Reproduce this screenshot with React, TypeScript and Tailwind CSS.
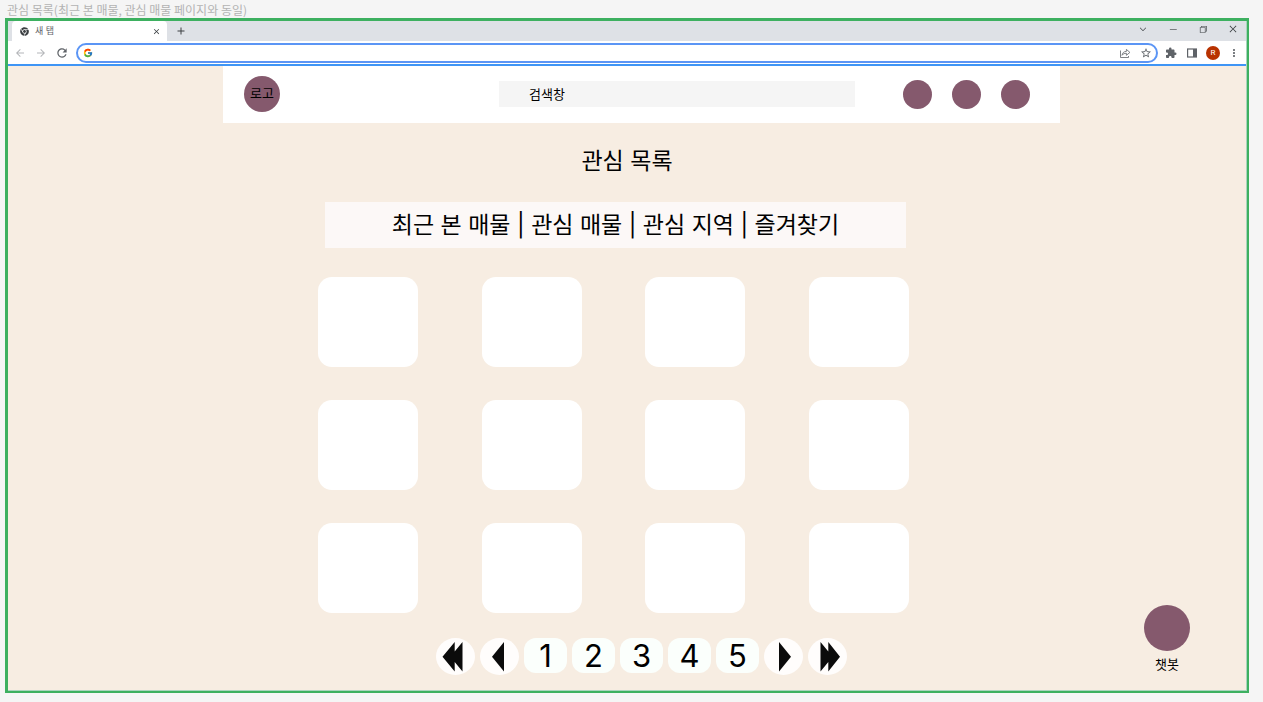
import type { ReactNode } from 'react';
import { FaChrome } from 'react-icons/fa';
import { FcGoogle } from 'react-icons/fc';
import {
  MdAdd,
  MdArrowBack,
  MdArrowForward,
  MdClose,
  MdExtension,
  MdMoreVert,
  MdRefresh,
  MdStarBorder,
} from 'react-icons/md';
import { VscChevronDown, VscChromeClose, VscChromeMinimize, VscChromeRestore } from 'react-icons/vsc';

const SECTIONS = ['최근 본 매물', '관심 매물', '관심 지역', '즐겨찾기'];
const SHORTCUTS = ['알림', '관심', '내 정보'];
const LISTINGS = Array.from({ length: 12 }, (_, i) => i + 1);
const PAGES = [1, 2, 3, 4, 5];

function ShareIcon() {
  return (
    <svg viewBox="0 0 12 12" className="h-3 w-3" fill="none" stroke="currentColor" strokeWidth="0.8">
      <path d="M1.5 3.5V10.5H9.5V9" />
      <path d="M3 8.3C3.4 5.8 4.9 4.5 7.4 4.4V2.4L10.9 5.4L7.4 8.3V6.3C5.3 6.3 4 6.9 3 8.3Z" />
    </svg>
  );
}

function SidePanelIcon() {
  return (
    <svg viewBox="0 0 12 12" className="h-3 w-3">
      <rect x="1.6" y="2" width="8.8" height="8" fill="none" stroke="currentColor" strokeWidth="1.2" />
      <rect x="7" y="2" width="3.4" height="8" fill="currentColor" />
    </svg>
  );
}

function TabStrip() {
  return (
    <div className="flex h-5 bg-[#dee1e6] pl-1">
      <div className="flex h-full w-[155px] items-center rounded-t-sm bg-white pl-2 pr-1.5 text-[#3c4043]">
        <FaChrome className="h-[9px] w-[9px]" />
        <span className="ml-1.5 font-['Inter','Noto_Sans_CJK_KR',sans-serif] text-[9px] leading-3 text-[#5f6368]">
          새 탭
        </span>
        <button type="button" aria-label="탭 닫기" className="ml-auto">
          <MdClose className="h-[9px] w-[9px]" />
        </button>
      </div>
      <button type="button" aria-label="새 탭 열기" className="ml-2 text-[#3c4043]">
        <MdAdd className="h-3 w-3" />
      </button>
      <div className="ml-auto flex items-center gap-5 pb-1 pr-2 text-[#3c4043]">
        <button type="button" aria-label="탭 검색">
          <VscChevronDown className="h-2.5 w-2.5" />
        </button>
        <button type="button" aria-label="최소화">
          <VscChromeMinimize className="h-2.5 w-2.5" />
        </button>
        <button type="button" aria-label="이전 크기로 복원">
          <VscChromeRestore className="h-2.5 w-2.5" />
        </button>
        <button type="button" aria-label="닫기">
          <VscChromeClose className="h-2.5 w-2.5" />
        </button>
      </div>
    </div>
  );
}

function ToolbarButton({ label, children }: { label: string; children: ReactNode }) {
  return (
    <button type="button" aria-label={label} className="flex h-3.5 w-3.5 items-center justify-center">
      {children}
    </button>
  );
}

function Toolbar() {
  return (
    <div className="flex h-[25px] items-center border-b-2 border-[#3f95f5] bg-white px-[5px] text-[#5f6368]">
      <div className="flex w-[63px] gap-[7px]">
        <span className="flex gap-[7px] text-[#b4b6b9]">
          <ToolbarButton label="뒤로">
            <MdArrowBack className="h-3 w-3" />
          </ToolbarButton>
          <ToolbarButton label="앞으로">
            <MdArrowForward className="h-3 w-3" />
          </ToolbarButton>
        </span>
        <ToolbarButton label="새로고침">
          <MdRefresh className="h-3.5 w-3.5" />
        </ToolbarButton>
      </div>
      <div className="flex h-5 min-w-0 flex-1 items-center rounded-full border-2 border-[#5b95f5] bg-white pl-[5px] pr-[3px]">
        <FcGoogle className="h-2.5 w-2.5" />
        <input aria-label="주소창" className="ml-2 min-w-0 flex-1 text-[9px] leading-3 outline-none" />
        <div className="flex gap-[7px]">
          <ToolbarButton label="공유">
            <ShareIcon />
          </ToolbarButton>
          <ToolbarButton label="북마크">
            <MdStarBorder className="h-3 w-3" />
          </ToolbarButton>
        </div>
      </div>
      <div className="ml-1.5 flex items-center gap-[7px]">
        <ToolbarButton label="확장 프로그램">
          <MdExtension className="h-3 w-3" />
        </ToolbarButton>
        <ToolbarButton label="측면 패널">
          <SidePanelIcon />
        </ToolbarButton>
        <button
          type="button"
          className="flex h-3.5 w-3.5 items-center justify-center rounded-full bg-[#b83200] font-['Roboto',sans-serif] text-[8px] leading-none text-white"
        >
          R
        </button>
        <ToolbarButton label="메뉴">
          <MdMoreVert className="h-3 w-3" />
        </ToolbarButton>
      </div>
    </div>
  );
}

function SiteHeader() {
  return (
    <div className="pl-[29px]">
      <header className="mx-auto flex h-[57px] max-w-[837px] items-center bg-white pb-px pl-[21px] pr-[30px]">
        <a
          href="#"
          className="flex h-9 w-9 shrink-0 items-center justify-center rounded-full bg-[#85596d] pb-0.5 text-[13px] leading-5"
        >
          로고
        </a>
        <input
          type="search"
          aria-label="검색창"
          placeholder="검색창"
          className="ml-[219px] mr-12 h-[26px] min-w-0 flex-1 bg-[#f5f5f5] pb-0.5 pl-[30px] text-[13px] leading-5 outline-none placeholder:text-black placeholder:opacity-100"
        />
        <div className="flex gap-5">
          {SHORTCUTS.map((name) => (
            <button key={name} type="button" aria-label={name} className="h-[29px] w-[29px] rounded-full bg-[#85596d]" />
          ))}
        </div>
      </header>
    </div>
  );
}

function SectionTabs() {
  return (
    <div className="mt-[23px] pr-[23px]">
      <nav className="mx-auto max-w-[581px] bg-[#fcf8f7] py-[5px] text-center font-['Inter','Noto_Sans_CJK_KR',sans-serif] text-[23px] leading-9">
        {SECTIONS.map((section, i) => (
          <span key={section}>
            {i > 0 && ' | '}
            <a href="#">{section}</a>
          </span>
        ))}
      </nav>
    </div>
  );
}

function Listings() {
  return (
    <div className="mt-[29px] pr-[27px]">
      <ul className="mx-auto grid max-w-[591px] grid-cols-[repeat(4,100px)] justify-between gap-y-[33px]">
        {LISTINGS.map((id) => (
          <li key={id} className="h-[90px] rounded-[14px] bg-white" />
        ))}
      </ul>
    </div>
  );
}

function ArrowButton({ label, children }: { label: string; children: ReactNode }) {
  return (
    <button
      type="button"
      aria-label={label}
      className="flex h-[37px] w-[39px] items-center justify-center rounded-[50%] bg-[#fffdfc]"
    >
      <svg viewBox="0 0 39 37" className="h-[37px] w-[39px]" fill="#0b0b0b">
        {children}
      </svg>
    </button>
  );
}

function Pagination() {
  return (
    <div className="mt-[25px] pl-[29px]">
      <nav aria-label="페이지" className="flex items-start justify-center gap-[5px]">
        <ArrowButton label="처음">
          <path d="M6.5 18.7L18.7 4V13.6L26.5 4V33.5L18.7 24V33.5Z" />
        </ArrowButton>
        <ArrowButton label="이전">
          <path d="M12 18.7L24 4V33.5Z" />
        </ArrowButton>
        {PAGES.map((page) => (
          <button
            key={page}
            type="button"
            className="h-[35px] w-[43px] rounded-xl bg-[#fbfffc] font-['Inter',sans-serif] text-[31px] leading-[35px]"
          >
            {page}
          </button>
        ))}
        <ArrowButton label="다음">
          <path d="M27 18.7L15 4V33.5Z" />
        </ArrowButton>
        <ArrowButton label="마지막">
          <path d="M32 18.7L20.3 4V13.6L12.5 4V33.5L20.3 24V33.5Z" />
        </ArrowButton>
      </nav>
    </div>
  );
}

export default function App() {
  return (
    <div className="min-h-screen bg-[#f5f5f5] pb-[9px] pl-[5px] pr-[14px] font-['Noto_Sans_CJK_KR',sans-serif] text-black">
      <p className="h-[18px] pl-0.5 pt-0.5 text-xs leading-4 text-[#b3b3b3]">
        관심 목록(최근 본 매물, 관심 매물 페이지와 동일)
      </p>
      <div className="border-b-2 border-l-[3px] border-r-2 border-t-[3px] border-[#3db060]">
        <div className="relative border-b border-r border-[#a9d4bd] bg-[#f7ede2] pb-[15px]">
          <TabStrip />
          <Toolbar />
          <main>
            <SiteHeader />
            <h1 className="mt-5 text-center font-['Inter','Noto_Sans_CJK_KR',sans-serif] text-[23px] leading-9">
              관심 목록
            </h1>
            <SectionTabs />
            <Listings />
            <Pagination />
          </main>
          <button type="button" className="absolute bottom-4 right-14 flex flex-col items-center gap-[3px]">
            <span className="h-[46px] w-[46px] rounded-full bg-[#85596d]" />
            <span className="text-[13px] leading-5">챗봇</span>
          </button>
        </div>
      </div>
    </div>
  );
}
